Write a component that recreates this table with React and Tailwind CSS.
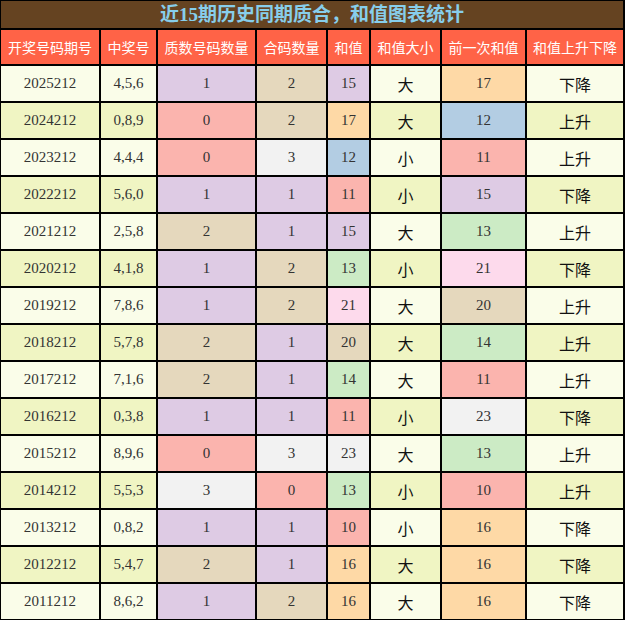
import React from "react";

const C = {
  r: "bg-[#fbb4ae]",
  b: "bg-[#b3cde3]",
  g: "bg-[#ccebc5]",
  p: "bg-[#decbe4]",
  o: "bg-[#fed9a6]",
  t: "bg-[#e5d8bd]",
  k: "bg-[#fddaec]",
  y: "bg-[#f2f2f2]",
};

const cnt = { 0: "r", 1: "p", 2: "t", 3: "y" };
const sum = { 10: "r", 11: "r", 12: "b", 13: "g", 14: "g", 15: "p", 16: "o", 17: "o", 20: "t", 21: "k", 23: "y" };

const rows = [
  ["2025212", "4,5,6", 1, 2, 15, "大", 17, "下降"],
  ["2024212", "0,8,9", 0, 2, 17, "大", 12, "上升"],
  ["2023212", "4,4,4", 0, 3, 12, "小", 11, "上升"],
  ["2022212", "5,6,0", 1, 1, 11, "小", 15, "下降"],
  ["2021212", "2,5,8", 2, 1, 15, "大", 13, "上升"],
  ["2020212", "4,1,8", 1, 2, 13, "小", 21, "下降"],
  ["2019212", "7,8,6", 1, 2, 21, "大", 20, "上升"],
  ["2018212", "5,7,8", 2, 1, 20, "大", 14, "上升"],
  ["2017212", "7,1,6", 2, 1, 14, "大", 11, "上升"],
  ["2016212", "0,3,8", 1, 1, 11, "小", 23, "下降"],
  ["2015212", "8,9,6", 0, 3, 23, "大", 13, "上升"],
  ["2014212", "5,5,3", 3, 0, 13, "小", 10, "上升"],
  ["2013212", "0,8,2", 1, 1, 10, "小", 16, "下降"],
  ["2012212", "5,4,7", 2, 1, 16, "大", 16, "下降"],
  ["2011212", "8,6,2", 1, 2, 16, "大", 16, "下降"],
];

const headers = ["开奖号码期号", "中奖号", "质数号码数量", "合码数量", "和值", "和值大小", "前一次和值", "和值上升下降"];

const num = "font-['Liberation_Serif','Noto_Sans_CJK_SC',serif] text-[15px] text-[#333]";
const cjk = "font-['Noto_Sans_CJK_SC',sans-serif] text-[16px] text-[#111]";

function Cell({ bg, cls, children }) {
  return <div className={`h-[35px] flex items-center justify-center ${bg} ${cls}`}>{children}</div>;
}

export default function App() {
  return (
    <div className="w-[625px] h-[620px] bg-black pt-[1px] pl-[1px] pr-[2px] pb-[1px]">
      <div className="grid grid-cols-[98px_55px_97px_69px_41px_69px_83px_96px] gap-[2px]">
        <div className="col-span-8 h-[27px] bg-[#654321] flex items-center justify-center font-['Liberation_Serif','Noto_Sans_CJK_SC',serif] font-bold text-[19px] text-[#87ceeb] leading-none">
          近15期历史同期质合，和值图表统计
        </div>
        {headers.map((h) => (
          <div key={h} className="h-[34px] bg-[#ff6347] flex items-center justify-center font-['Noto_Sans_CJK_SC',sans-serif] text-[14px] text-white">
            {h}
          </div>
        ))}
        {rows.map((r, i) => {
          const rb = i % 2 === 0 ? "bg-[#fafde9]" : "bg-[#f0f5c3]";
          return (
            <React.Fragment key={r[0]}>
              <Cell bg={rb} cls={num}>{r[0]}</Cell>
              <Cell bg={rb} cls={num}>{r[1]}</Cell>
              <Cell bg={C[cnt[r[2]]]} cls={num}>{r[2]}</Cell>
              <Cell bg={C[cnt[r[3]]]} cls={num}>{r[3]}</Cell>
              <Cell bg={C[sum[r[4]]]} cls={num}>{r[4]}</Cell>
              <Cell bg={rb} cls={cjk}>{r[5]}</Cell>
              <Cell bg={C[sum[r[6]]]} cls={num}>{r[6]}</Cell>
              <Cell bg={rb} cls={cjk}>{r[7]}</Cell>
            </React.Fragment>
          );
        })}
      </div>
    </div>
  );
}
